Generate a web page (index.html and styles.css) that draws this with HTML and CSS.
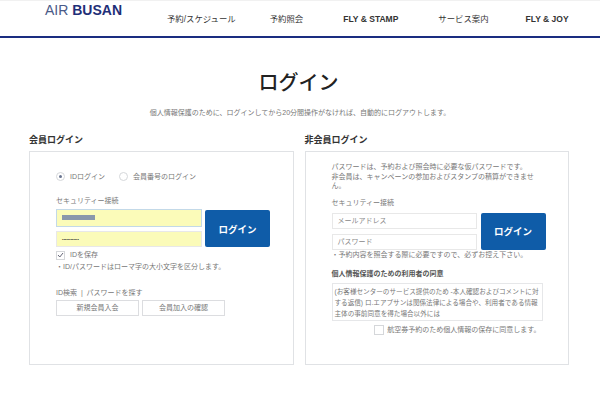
FILE: index.html
```html
<!DOCTYPE html>
<html lang="ja">
<head>
    <meta charset="UTF-8">
    <title>ログイン | AIR BUSAN</title>
    <link rel="stylesheet" href="styles.css">
</head>
<body>
    <div class="header">
        <div class="logo">AIR <b>BUSAN</b></div>
        <ul class="nav">
            <li>予約/スケジュール</li>
            <li>予約照会</li>
            <li>FLY &amp; STAMP</li>
            <li>サービス案内</li>
            <li>FLY &amp; JOY</li>
        </ul>
    </div>
    <h1 class="title">ログイン</h1>
    <p class="lead">個人情報保護のために、ログインしてから20分間操作がなければ、自動的にログアウトします。</p>
    <div class="columns">
        <div class="column">
            <h2>会員ログイン</h2>
            <div class="panel member">
                <div class="radios">
                    <label class="radio"><span class="dot on"></span>IDログイン</label>
                    <label class="radio"><span class="dot"></span>会員番号のログイン</label>
                </div>
                <div class="label">セキュリティー接続</div>
                <div class="form-row">
                    <div class="fields">
                        <div class="field filled focus"><span class="blur-id"></span></div>
                        <div class="field filled"><span class="dots">••••••••••••</span></div>
                    </div>
                    <button class="login">ログイン</button>
                </div>
                <label class="save">
                    <span class="check">
                        <svg width="7" height="6" viewBox="0 0 7 6"><path d="M1 3l1.8 2L6 1" fill="none" stroke="#667" stroke-width="1"/></svg>
                    </span>IDを保存
                </label>
                <div class="note">・ID/パスワードはローマ字の大小文字を区分します。</div>
                <div class="find">ID検索 &nbsp;|&nbsp; パスワードを探す</div>
                <div class="links">
                    <a class="link-button">新規会員入会</a>
                    <a class="link-button">会員加入の確認</a>
                </div>
            </div>
        </div>
        <div class="column">
            <h2>非会員ログイン</h2>
            <div class="panel guest">
                <p class="intro">パスワードは、予約および照会時に必要な仮パスワードです。<br>非会員は、キャンペーンの参加およびスタンプの積算ができません。</p>
                <div class="label">セキュリティー接続</div>
                <div class="form-row">
                    <div class="fields">
                        <div class="field">メールアドレス</div>
                        <div class="field">パスワード</div>
                    </div>
                    <button class="login">ログイン</button>
                </div>
                <div class="note">・予約内容を照会する際に必要ですので、必ずお控え下さい。</div>
                <h3>個人情報保護のための利用者の同意</h3>
                <div class="terms">(お客様センターのサービス提供のため -本人確認およびコメントに対する返信) ロ.エアプサンは関係法律による場合や、利用者である情報主体の事前同意を得た場合以外には</div>
                <label class="agree"><span class="check big"></span>航空券予約のため個人情報の保存に同意します。</label>
            </div>
        </div>
    </div>
</body>
</html>
```

FILE: styles.css
```css
* {
    box-sizing: border-box;
}

body {
    margin: 0;
    height: 400px;
    overflow: hidden;
    background-color: #fff;
    color: #777;
    font-family: "Liberation Sans", "Noto Sans CJK JP", sans-serif;
    font-size: 7px;
}

.header {
    display: flex;
    height: 38px;
    border-bottom: 2px solid #1a2d80;
    border-top: 1px solid #f1f1f1;
}

.logo {
    width: 167px;
    padding-left: 45px;
    font-family: "Liberation Sans", sans-serif;
    font-size: 14px;
    line-height: 18px;
    color: #4a5a88;
}

.logo b {
    color: #1f2f78;
}

.nav {
    display: flex;
    list-style: none;
    margin: 0;
    padding: 12px 0 0;
    gap: 34px;
    font-size: 8.4px;
    line-height: 13px;
    color: #333;
}

.nav li:nth-child(3),
.nav li:nth-child(5) {
    font-weight: bold;
    font-size: 8.5px;
}

.nav li:nth-child(3) {
    margin-left: 6px;
}

.nav li:nth-child(4) {
    margin-left: 6px;
}

.nav li:nth-child(5) {
    margin-left: 3px;
}

.title {
    margin: 33px 3px 0 0;
    text-align: center;
    font-size: 20px;
    line-height: 24px;
    font-weight: 500;
    color: #222;
}

.lead {
    margin: 13px 0 0;
    text-align: center;
    font-size: 7px;
    line-height: 10px;
    color: #777;
}

.columns {
    display: flex;
    gap: 11px;
    margin: 16px 31px 0 29px;
}

.column {
    width: 265px;
}

.column h2 {
    margin: 0 0 5px;
    font-size: 9px;
    line-height: 12px;
    font-weight: bold;
    color: #333;
}

.panel {
    height: 214px;
    border: 1px solid #e0e2e5;
}

.member {
    padding: 18px 20px 18px 26px;
}

.guest {
    padding: 10px 20px 10px 26px;
}

.radios {
    display: flex;
    gap: 14px;
    height: 12px;
}

.radio, .save, .agree {
    display: flex;
    align-items: center;
}

.dot {
    position: relative;
    width: 9px;
    height: 9px;
    margin-right: 5px;
    border: 1px solid #d5d7da;
    border-radius: 50%;
}

.dot.on::after {
    content: "";
    position: absolute;
    top: 2px;
    left: 2px;
    width: 3px;
    height: 3px;
    border-radius: 50%;
    background-color: #6a7590;
}

.label {
    margin-top: 14px;
    line-height: 10px;
}

.form-row {
    display: flex;
    gap: 3px;
    margin-top: 3px;
}

.fields {
    display: flex;
    flex-direction: column;
    justify-content: space-between;
    flex: none;
    width: 146px;
    height: 38px;
}

.guest .fields {
    width: 145px;
    height: 37px;
}

.guest .form-row {
    gap: 4px;
    margin-top: 5px;
}

.field {
    height: 16px;
    padding-left: 5px;
    border: 1px solid #e8e8e8;
    line-height: 14px;
    color: #888;
    font-size: 7px;
}

.filled {
    background-color: #fbfbb9;
}

.focus {
    height: 18px;
    border-color: #c3d9e8;
}

.blur-id {
    display: block;
    width: 33px;
    height: 5px;
    margin-top: 5px;
    background-color: #8a97ab;
}

.dots {
    font-size: 4px;
    color: #333;
    line-height: 14px;
}

.login {
    flex: none;
    width: 65px;
    height: 37px;
    padding: 0;
    border: none;
    border-radius: 2px;
    background-color: #0f5ca8;
    color: #fff;
    font-family: inherit;
    font-size: 9.5px;
    font-weight: bold;
}

.member .login {
    margin-top: 1px;
}

.save {
    margin-top: 3px;
    line-height: 10px;
}

.check {
    display: flex;
    align-items: center;
    justify-content: center;
    width: 9px;
    height: 9px;
    margin-right: 5px;
    border: 1px solid #d5d7da;
}

.check.big {
    width: 10px;
    height: 10px;
    margin-right: 3px;
}

.note {
    line-height: 10px;
    margin-top: 2px;
}

.find {
    margin-top: 16px;
    line-height: 10px;
}

.links {
    display: flex;
    gap: 3px;
    margin-top: 2px;
}

.link-button {
    width: 83px;
    height: 16px;
    border: 1px solid #dcdde0;
    text-align: center;
    line-height: 14px;
}

.intro {
    margin: 0;
    width: 205px;
    line-height: 9.5px;
    font-size: 7px;
}

.guest .label {
    margin-top: 7px;
}

.guest .note {
    margin-top: 0;
}

.guest h3 {
    margin: 9px 0 0;
    font-size: 7px;
    line-height: 10px;
    font-weight: bold;
    color: #555;
}

.terms {
    width: 211px;
    height: 38px;
    margin-top: 4px;
    padding: 2px;
    border: 1px solid #e6e7e9;
    line-height: 11px;
    font-size: 6.6px;
}

.agree {
    justify-content: flex-end;
    width: 209px;
    margin-top: 3px;
    line-height: 12px;
}
```
